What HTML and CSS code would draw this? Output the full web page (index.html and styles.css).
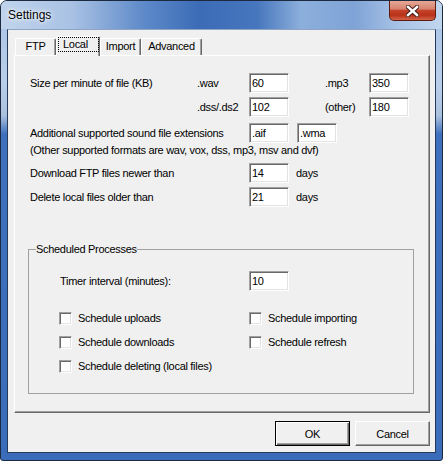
FILE: index.html
```html
<!DOCTYPE html>
<html>
<head>
    <meta charset="utf-8">
    <link rel="stylesheet" href="styles.css">
</head>
<body>
    <div class="window">
        <div class="titlebar">
            <span class="title">Settings</span>
            <div class="close">
                <svg width="13" height="12" viewBox="0 0 13 12">
                    <path d="M2 2 L11 10 M11 2 L2 10" stroke="#43201a" stroke-width="4.4" stroke-linecap="square"/>
                    <path d="M2 2 L11 10 M11 2 L2 10" stroke="#ffffff" stroke-width="2.4" stroke-linecap="square"/>
                </svg>
            </div>
        </div>

        <div class="client">
            <div class="tabs">
                <div class="tab tab-ftp">FTP</div>
                <div class="tab tab-local active"><span class="focus">Local</span></div>
                <div class="tab tab-import">Import</div>
                <div class="tab tab-advanced">Advanced</div>
            </div>

            <div class="panel">
                <div class="row">
                    <span class="lbl w-main">Size per minute of file (KB)</span>
                    <span class="lbl w-ext">.wav</span>
                    <input class="field" type="text" value="60">
                    <span class="lbl w-ext2">.mp3</span>
                    <input class="field" type="text" value="350">
                </div>
                <div class="row row-tight">
                    <span class="lbl w-main"></span>
                    <span class="lbl w-ext">.dss/.ds2</span>
                    <input class="field" type="text" value="102">
                    <span class="lbl w-ext2">(other)</span>
                    <input class="field" type="text" value="180">
                </div>
                <div class="row row-loose">
                    <span class="lbl w-wide">Additional supported sound file extensions</span>
                    <input class="field" type="text" value=".aif">
                    <input class="field second" type="text" value=".wma">
                </div>
                <div class="note">(Other supported formats are wav, vox, dss, mp3, msv and dvf)</div>
                <div class="row row-loose">
                    <span class="lbl w-wide">Download FTP files newer than</span>
                    <input class="field" type="text" value="14">
                    <span class="unit">days</span>
                </div>
                <div class="row row-tight">
                    <span class="lbl w-wide">Delete local files older than</span>
                    <input class="field" type="text" value="21">
                    <span class="unit">days</span>
                </div>

                <fieldset class="group">
                    <legend>Scheduled Processes</legend>
                    <div class="group-body">
                        <div class="row">
                            <span class="lbl w-timer">Timer interval (minutes):</span>
                            <input class="field" type="text" value="10">
                        </div>
                        <div class="checks">
                            <label class="check"><span class="box"></span>Schedule uploads</label>
                            <label class="check"><span class="box"></span>Schedule importing</label>
                            <label class="check"><span class="box"></span>Schedule downloads</label>
                            <label class="check"><span class="box"></span>Schedule refresh</label>
                            <label class="check"><span class="box"></span>Schedule deleting (local files)</label>
                        </div>
                    </div>
                </fieldset>
            </div>

            <div class="buttons">
                <button class="btn default">OK</button>
                <button class="btn">Cancel</button>
            </div>
        </div>
    </div>
</body>
</html>
```

FILE: styles.css
```css
body {
    margin: 0;
    background: #ffffff;
    font-family: "Liberation Sans", Arial, sans-serif;
}
.window {
    width: 443px;
    height: 461px;
    box-sizing: border-box;
    border: 1px solid #1c2a40;
    border-radius: 7px 7px 3px 3px;
    overflow: hidden;
    background: linear-gradient(to bottom, #a9c4e6 0, #b9cee9 18%, #aac1de 25%, #3f70bd 29%, #3a6cba 100%);
}
.titlebar {
    display: flex;
    align-items: flex-start;
    height: 28px;
    padding-left: 7px;
    background: linear-gradient(to right, #c0d4ec 0%, #a9c2e4 16%, #5b88c8 33%, #3c6cb6 45%, #4676bd 58%, #8cafdc 68%, #7fa3d6 80%, #a7c2e6 90%, #c2d6ee 100%);
}
.title {
    margin-top: 7px;
    font-size: 12px;
    line-height: 14px;
    color: #000;
    text-shadow: 0 0 6px #ffffff, 0 0 3px #ffffff;
}
.close {
    display: flex;
    align-items: center;
    justify-content: center;
    margin-left: auto;
    margin-right: 6px;
    width: 47px;
    height: 20px;
    box-sizing: border-box;
    border: 1px solid #5e1a0e;
    border-top: none;
    border-radius: 0 0 5px 5px;
    background: linear-gradient(to bottom, #e6a796 0%, #d88370 42%, #c4432a 50%, #b93219 75%, #d3644a 100%);
}
.client {
    margin: 0 6px;
    height: 424px;
    box-sizing: border-box;
    border: 1px solid #26395b;
    border-top-color: #8ea4c2;
    background: #f0f0f0;
    padding: 6px 0 0 6px;
    display: flex;
    flex-direction: column;
    font-size: 11px;
    letter-spacing: -0.3px;
    color: #000;
}
.tabs {
    display: flex;
    align-items: flex-end;
    height: 19px;
    position: relative;
    z-index: 1;
}
.tab {
    box-sizing: border-box;
    height: 17px;
    line-height: 15px;
    text-align: center;
    background: #f0f0f0;
    border: 1px solid #ffffff;
    border-bottom: none;
    border-right-color: #696969;
    border-radius: 2px 2px 0 0;
    box-shadow: inset -1px 0 0 #a0a0a0;
}
.tab-ftp { width: 41px; margin-left: 1px; }
.tab-local { width: 44px; }
.tab-import { width: 41px; }
.tab-advanced { width: 61px; }
.tab.active {
    height: 20px;
    margin-bottom: -1px;
    text-align: left;
}
.focus {
    display: block;
    box-sizing: border-box;
    width: 41px;
    height: 15px;
    margin-left: 1px;
    padding-left: 5px;
    outline: 1px dotted #000;
    outline-offset: -1px;
    line-height: 15px;
}
.panel {
    width: 416px;
    height: 358px;
    box-sizing: border-box;
    border: 1px solid #ffffff;
    border-right-color: #696969;
    border-bottom-color: #696969;
    box-shadow: inset -1px -1px 0 #a0a0a0;
    padding: 17px 0 0 15px;
}
.row {
    display: flex;
    align-items: center;
    height: 20px;
}
.row-tight { margin-top: 4px; }
.row-loose { margin-top: 6px; }
.lbl { white-space: nowrap; }
.w-main { width: 167px; }
.w-ext { width: 52px; }
.w-ext2 { width: 44px; margin-left: 36px; }
.w-wide { width: 219px; }
.w-timer { width: 189px; margin-left: 1px; }
.field {
    width: 40px;
    height: 20px;
    box-sizing: border-box;
    margin: 0;
    padding: 0 0 0 2px;
    border: 1px solid;
    border-color: #a0a0a0 #ffffff #ffffff #a0a0a0;
    box-shadow: inset 1px 1px 0 #696969, inset -1px -1px 0 #e3e3e3;
    background: #ffffff;
    font-family: "Liberation Sans", Arial, sans-serif;
    font-size: 11px;
    letter-spacing: -0.3px;
    color: #000;
    outline: none;
}
.second { margin-left: 8px; }
.unit { margin-left: 7px; }
.note {
    margin-top: 1px;
    line-height: 13px;
    white-space: nowrap;
}
.group {
    margin: 36px 0 0 -2px;
    width: 386px;
    box-sizing: border-box;
    padding: 0;
    border: 1px solid #a0a0a0;
}
.group legend {
    margin-left: 7px;
    padding: 0;
    line-height: 13px;
}
.group-body {
    padding: 15px 0 15px 30px;
}
.checks {
    display: grid;
    grid-template-columns: 190px auto;
    grid-auto-rows: 24px;
    margin-top: 15px;
}
.check {
    display: flex;
    align-items: center;
    white-space: nowrap;
}
.box {
    width: 13px;
    height: 13px;
    box-sizing: border-box;
    margin-right: 6px;
    background: #ffffff;
    border: 1px solid;
    border-color: #a0a0a0 #ffffff #ffffff #a0a0a0;
    box-shadow: inset 1px 1px 0 #696969, inset -1px -1px 0 #e3e3e3;
}
.buttons {
    display: flex;
    justify-content: flex-end;
    gap: 5px;
    width: 416px;
    margin-top: 8px;
}
.btn {
    width: 75px;
    height: 25px;
    box-sizing: border-box;
    margin: 0;
    padding: 0;
    background: #f0f0f0;
    border: 1px solid;
    border-color: #ffffff #696969 #696969 #ffffff;
    box-shadow: inset -1px -1px 0 #a0a0a0;
    font-family: "Liberation Sans", Arial, sans-serif;
    font-size: 11px;
    letter-spacing: -0.3px;
    color: #000;
}
.btn.default {
    border-color: #000;
    box-shadow: inset 1px 1px 0 #ffffff, inset -1px -1px 0 #696969, inset -2px -2px 0 #a0a0a0;
}
```
